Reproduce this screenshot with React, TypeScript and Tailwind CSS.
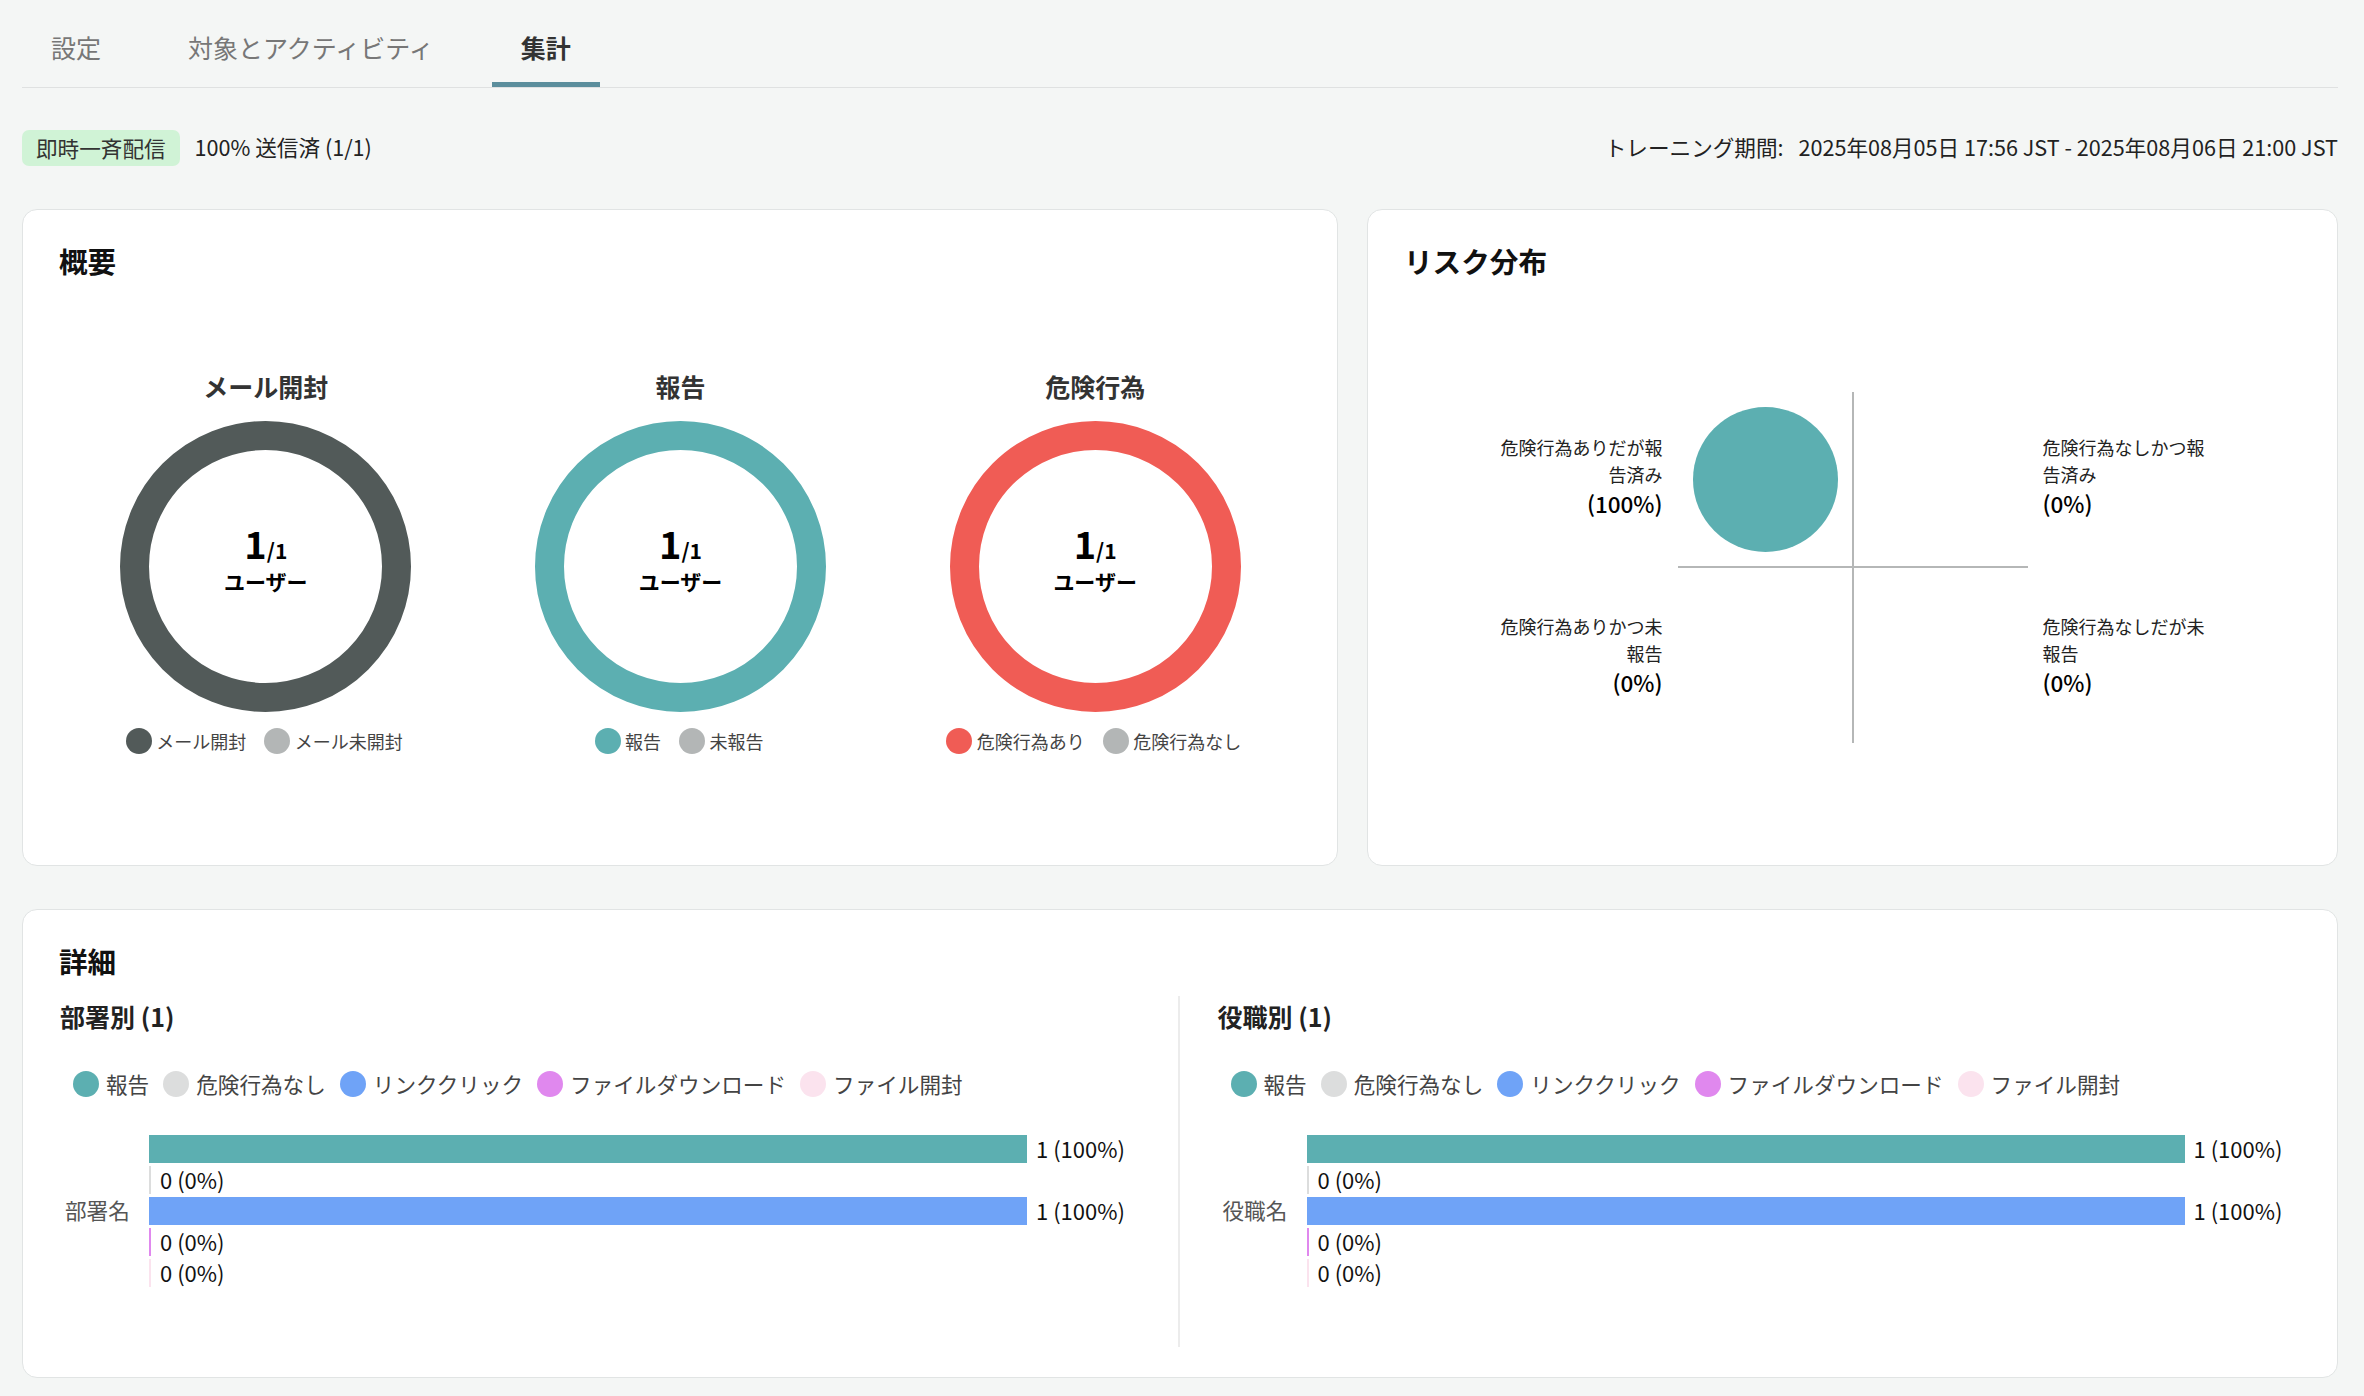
const tabs = [
  { label: "設定", active: false },
  { label: "対象とアクティビティ", active: false },
  { label: "集計", active: true },
];

const donuts = [
  {
    title: "メール開封",
    ring: "border-[#525a59]",
    legend: [
      { label: "メール開封", dot: "bg-[#525a59]" },
      { label: "メール未開封", dot: "bg-[#b3b6b6]" },
    ],
  },
  {
    title: "報告",
    ring: "border-[#5cafb1]",
    legend: [
      { label: "報告", dot: "bg-[#5cafb1]" },
      { label: "未報告", dot: "bg-[#b3b6b6]" },
    ],
  },
  {
    title: "危険行為",
    ring: "border-[#f05c55]",
    legend: [
      { label: "危険行為あり", dot: "bg-[#f05c55]" },
      { label: "危険行為なし", dot: "bg-[#b3b6b6]" },
    ],
  },
];

const detailLegend = [
  { label: "報告", dot: "bg-[#5cafb1]" },
  { label: "危険行為なし", dot: "bg-[#dcdddd]" },
  { label: "リンククリック", dot: "bg-[#6fa3f7]" },
  { label: "ファイルダウンロード", dot: "bg-[#e088ee]" },
  { label: "ファイル開封", dot: "bg-[#fbe3ee]" },
];

const detailBars = [
  { value: "1 (100%)", bar: "w-[878px] bg-[#5cafb1]" },
  { value: "0 (0%)", bar: "w-[2px] bg-[#dcdddd]" },
  { value: "1 (100%)", bar: "w-[878px] bg-[#6fa3f7]" },
  { value: "0 (0%)", bar: "w-[2px] bg-[#e088ee]" },
  { value: "0 (0%)", bar: "w-[2px] bg-[#fbe3ee]" },
];

const Card = ({ title, className, children }: { title: string; className: string; children: React.ReactNode }) => (
  <section className={`rounded-[15px] border-[1.5px] border-[#e1e4e4] bg-white px-[37px] pt-[32px] ${className}`}>
    <h2 className="-ml-px text-[28.6px] leading-[38px] font-bold text-[#111]">{title}</h2>
    {children}
  </section>
);

const Donut = ({ title, ring, legend }: (typeof donuts)[number]) => (
  <div className="flex flex-1 flex-col items-center">
    <h3 className="text-[25px] leading-[34px] font-bold text-[#333]">{title}</h3>
    <div className={`mt-[17.5px] flex h-[291px] w-[291px] flex-col items-center justify-center rounded-full border-[29px] pb-[18px] ${ring}`}>
      <div className="flex h-[48px] items-baseline text-black">
        <span className="text-[38px] leading-[48px] font-bold">1</span>
        <span className="text-[21px] font-bold">/1</span>
      </div>
      <div className="text-[21px] leading-[28px] font-bold text-black">ユーザー</div>
    </div>
    <div className="mt-[16.5px] flex gap-[18px] pr-[3px]">
      {legend.map((item) => (
        <div key={item.label} className="flex items-center gap-[4.5px]">
          <span className={`h-[26px] w-[26px] rounded-full ${item.dot}`} />
          <span className="text-[18px] leading-[26px] text-[#444]">{item.label}</span>
        </div>
      ))}
    </div>
  </div>
);

const RiskLabel = ({ text, pct, right }: { text: string; pct: string; right?: boolean }) => (
  <div className={right ? "text-left" : "text-right"}>
    <div className="text-[18px] leading-[27px] text-[#222]">{text}</div>
    <div className="text-[22.5px] leading-[31px] font-medium text-black">{pct}</div>
  </div>
);

const DetailColumn = ({ title, name }: { title: string; name: string }) => (
  <div className="pt-[3px]">
    <h3 className="text-[25px] leading-[34px] font-bold text-[#222]">{title}</h3>
    <div className="mt-[38px] ml-[13px] flex gap-[14px]">
      {detailLegend.map((item) => (
        <div key={item.label} className="flex items-center gap-[7px]">
          <span className={`h-[26px] w-[26px] rounded-full ${item.dot}`} />
          <span className="text-[21.6px] leading-[26px] text-[#444]">{item.label}</span>
        </div>
      ))}
    </div>
    <div className="mt-[37.5px] flex items-center">
      <div className="w-[89px] pb-[1px] pl-[5px] text-[21.6px] text-[#555]">{name}</div>
      <div className="flex flex-col gap-[3.2px]">
        {detailBars.map((row, i) => (
          <div key={i} className="flex h-[28px] items-center">
            <div className={`h-full ${row.bar}`} />
            <span className="ml-[9px] pb-[2px] text-[22px] leading-[26px] text-[#111]">{row.value}</span>
          </div>
        ))}
      </div>
    </div>
  </div>
);

export default function App() {
  return (
    <div className="min-h-screen bg-[#f4f6f5] pr-[26px] pl-[22px] font-['Noto_Sans_CJK_JP','Noto_Sans',sans-serif]">
      <div className="flex h-[88px] gap-[29px] border-b-[1.5px] border-[#dfe1e1]">
        {tabs.map((tab) => (
          <button
            key={tab.label}
            className={`h-[87px] border-b-[5px] px-[29px] pt-[14px] text-[25px] ${
              tab.active ? "border-[#5b8e9c] font-bold text-[#333]" : "border-transparent text-[#777]"
            }`}
          >
            {tab.label}
          </button>
        ))}
      </div>

      <div className="mt-[42px] flex h-[36px] items-center justify-between text-[21.6px] text-[#222]">
        <div className="flex items-center gap-[15px]">
          <span className="flex h-[36px] items-center rounded-[7px] bg-[#d0f3d6] px-[14px] text-[#333]">即時一斉配信</span>
          <span className="pb-[2px]">100% 送信済 (1/1)</span>
        </div>
        <div className="flex gap-[15px] pb-[2px]">
          <span>トレーニング期間:</span>
          <span>2025年08月05日 17:56 JST - 2025年08月06日 21:00 JST</span>
        </div>
      </div>

      <div className="mt-[43px] flex gap-[29px]">
        <Card title="概要" className="h-[657px] w-[1316px]">
          <div className="mt-[89px] -ml-[1.5px] flex w-[1244px]">
            {donuts.map((d) => (
              <Donut key={d.title} {...d} />
            ))}
          </div>
        </Card>

        <Card title="リスク分布" className="h-[657px] flex-1">
          <div className="mt-[112px] flex justify-center gap-[15px]">
            <div className="flex w-[162px] flex-col gap-[94px] pt-[42px]">
              <RiskLabel text="危険行為ありだが報告済み" pct="(100%)" />
              <RiskLabel text="危険行為ありかつ未報告" pct="(0%)" />
            </div>
            <div className="relative h-[351px] w-[350px]">
              <div className="absolute top-0 left-[174px] h-full w-[2px] bg-[#b5b7b7]" />
              <div className="absolute top-[174px] left-0 h-[2px] w-full bg-[#b5b7b7]" />
              <div className="absolute top-[15px] left-[15px] h-[145px] w-[145px] rounded-full bg-[#5cafb1]" />
            </div>
            <div className="flex w-[162px] flex-col gap-[94px] pt-[42px]">
              <RiskLabel right text="危険行為なしかつ報告済み" pct="(0%)" />
              <RiskLabel right text="危険行為なしだが未報告" pct="(0%)" />
            </div>
          </div>
        </Card>
      </div>

      <Card title="詳細" className="mt-[43px] h-[469px]">
        <div className="mt-[16px] flex">
          <div className="h-[351px] w-[1120px] border-r-2 border-[#ececec]">
            <DetailColumn title="部署別 (1)" name="部署名" />
          </div>
          <div className="pl-[37.5px]">
            <DetailColumn title="役職別 (1)" name="役職名" />
          </div>
        </div>
      </Card>
    </div>
  );
}
